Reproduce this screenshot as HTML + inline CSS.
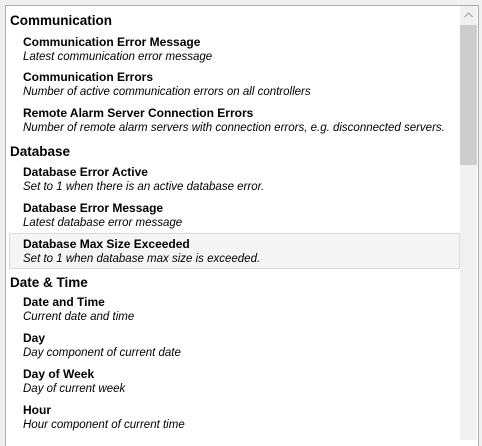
<!DOCTYPE html>
<html><head><style>
html,body{margin:0;padding:0;}
body{width:482px;height:440px;background:#f0f0f0;position:relative;overflow:hidden;font-family:"Liberation Sans",sans-serif;color:#000;}
.frame{position:absolute;left:5px;top:5px;width:472px;height:440px;border-left:1px solid #adadad;border-top:1px solid #adadad;border-right:1px solid #adadad;background:#fff;}
.sb{position:absolute;left:460px;top:6px;width:17px;height:434px;background:#f0f0f0;}
.thumb{position:absolute;left:0;top:19px;width:17px;height:140px;background:#cdcdcd;}
.hl{position:absolute;left:9px;top:233px;width:449px;height:34px;background:#f5f5f5;border:1px solid #dadada;}
.t{position:absolute;white-space:nowrap;line-height:1;}
.h{left:10px;font-weight:bold;font-size:13.5px;}
.n{left:23px;font-weight:bold;font-size:12px;}
.d{left:23px;font-style:italic;font-size:11.5px;}
</style></head><body>
<div class="frame"></div>
<div class="hl"></div>
<div class="sb"><svg width="17" height="18" style="position:absolute;left:0;top:0"><path d="M4.5 11 L8.5 7 L12.5 11" fill="none" stroke="#a0a0a0" stroke-width="1"/></svg><div class="thumb"></div></div>
<div class="t h" style="top:14px">Communication</div>
<div class="t n" style="top:36px">Communication Error Message</div>
<div class="t d" style="top:52px">Latest communication error message</div>
<div class="t n" style="top:71px">Communication Errors</div>
<div class="t d" style="top:87px">Number of active communication errors on all controllers</div>
<div class="t n" style="top:107px">Remote Alarm Server Connection Errors</div>
<div class="t d" style="top:123px">Number of remote alarm servers with connection errors, e.g. disconnected servers.</div>
<div class="t h" style="top:145px">Database</div>
<div class="t n" style="top:166px">Database Error Active</div>
<div class="t d" style="top:182px">Set to 1 when there is an active database error.</div>
<div class="t n" style="top:202px">Database Error Message</div>
<div class="t d" style="top:218px">Latest database error message</div>
<div class="t n" style="top:238px">Database Max Size Exceeded</div>
<div class="t d" style="top:254px">Set to 1 when database max size is exceeded.</div>
<div class="t h" style="top:276px">Date &amp; Time</div>
<div class="t n" style="top:296px">Date and Time</div>
<div class="t d" style="top:312px">Current date and time</div>
<div class="t n" style="top:332px">Day</div>
<div class="t d" style="top:348px">Day component of current date</div>
<div class="t n" style="top:368px">Day of Week</div>
<div class="t d" style="top:384px">Day of current week</div>
<div class="t n" style="top:404px">Hour</div>
<div class="t d" style="top:420px">Hour component of current time</div>
</body></html>
